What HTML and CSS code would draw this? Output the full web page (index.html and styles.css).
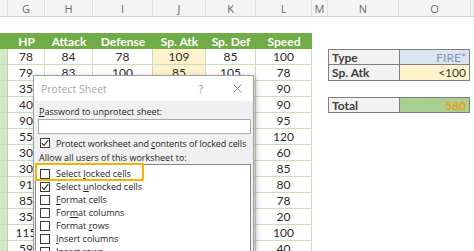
FILE: index.html
```html
<!DOCTYPE html>
<html>
<head>
<meta charset="utf-8">
<link rel="stylesheet" href="styles.css">
</head>
<body>
<div class="sheet">
  <div class="colheads">
    <span></span><span>G</span><span>H</span><span>I</span><span>J</span><span>K</span><span>L</span><span>M</span><span>N</span><span>O</span><span></span>
  </div>
  <div class="row"></div>
  <div class="row hdr">
    <span class="f"></span><span>HP</span><span>Attack</span><span>Defense</span><span>Sp. Atk</span><span>Sp. Def</span><span>Speed</span><span class="w"></span><span class="w"></span><span class="w"></span><span class="w"></span>
  </div>
  <div class="row data">
    <span class="f"></span><span>78</span><span>84</span><span>78</span><span class="sa">109</span><span>85</span><span>100</span><span class="e"></span>
    <span class="lab">Type</span><span class="val blue">FIRE*</span><span class="e"></span>
  </div>
  <div class="row data">
    <span class="f"></span><span>79</span><span>83</span><span>100</span><span class="sa">85</span><span>105</span><span>78</span><span class="e"></span>
    <span class="lab r2">Sp. Atk</span><span class="val r2 beige">&lt;100</span><span class="e"></span>
  </div>
  <div class="row data">
    <span class="f"></span><span>35</span><span></span><span></span><span class="sa"></span><span></span><span>90</span><span class="e"></span><span class="e"></span><span class="e"></span><span class="e"></span>
  </div>
  <div class="row data">
    <span class="f"></span><span>40</span><span></span><span></span><span class="sa"></span><span></span><span>90</span><span class="e"></span>
    <span class="lab">Total</span><span class="val green">580</span><span class="e"></span>
  </div>
  <div class="row data">
    <span class="f"></span><span>90</span><span></span><span></span><span class="sa"></span><span></span><span>95</span><span class="e"></span><span class="e"></span><span class="e"></span><span class="e"></span>
  </div>
  <div class="row data">
    <span class="f"></span><span>55</span><span></span><span></span><span class="sa"></span><span></span><span>120</span><span class="e"></span><span class="e"></span><span class="e"></span><span class="e"></span>
  </div>
  <div class="row data">
    <span class="f"></span><span>30</span><span></span><span></span><span class="sa"></span><span></span><span>60</span><span class="e"></span><span class="e"></span><span class="e"></span><span class="e"></span>
  </div>
  <div class="row data">
    <span class="f"></span><span>30</span><span></span><span></span><span class="sa"></span><span></span><span>85</span><span class="e"></span><span class="e"></span><span class="e"></span><span class="e"></span>
  </div>
  <div class="row data">
    <span class="f"></span><span>91</span><span></span><span></span><span class="sa"></span><span></span><span>80</span><span class="e"></span><span class="e"></span><span class="e"></span><span class="e"></span>
  </div>
  <div class="row data">
    <span class="f"></span><span>85</span><span></span><span></span><span class="sa"></span><span></span><span>78</span><span class="e"></span><span class="e"></span><span class="e"></span><span class="e"></span>
  </div>
  <div class="row data">
    <span class="f"></span><span>35</span><span></span><span></span><span class="sa"></span><span></span><span>20</span><span class="e"></span><span class="e"></span><span class="e"></span><span class="e"></span>
  </div>
  <div class="row data">
    <span class="f"></span><span>115</span><span></span><span></span><span class="sa"></span><span></span><span>100</span><span class="e"></span><span class="e"></span><span class="e"></span><span class="e"></span>
  </div>
  <div class="row data">
    <span class="f"></span><span>59</span><span></span><span></span><span class="sa"></span><span></span><span>40</span><span class="e"></span><span class="e"></span><span class="e"></span><span class="e"></span>
  </div>
</div>

<div class="dialog">
  <div class="dtitle">
    <span class="dname">Protect Sheet</span>
    <span class="qm">?</span>
    <svg class="xbtn" width="9" height="9" viewBox="0 0 9 9"><path d="M0.5 0.5L8.5 8.5M8.5 0.5L0.5 8.5" stroke="#8a8a8a" stroke-width="1"/></svg>
  </div>
  <div class="dbody">
    <div class="lbl"><u>P</u>assword to unprotect sheet:</div>
    <div class="pwd"></div>
    <div class="chkrow">
      <span class="cb"><svg width="8" height="8" viewBox="0 0 8 8"><path d="M0.8 4.2L3 6.4L7.2 1.2" fill="none" stroke="#333" stroke-width="1.1"/></svg></span>
      <span class="nw">Protect worksheet and <u>c</u>ontents of locked cells</span>
    </div>
    <div class="lbl lbl2">Allow all users of this worksheet to:</div>
    <div class="list">
      <div class="hl"></div>
      <div class="item"><span class="cb"></span><span>Select <u>l</u>ocked cells</span></div>
      <div class="item"><span class="cb"><svg width="8" height="8" viewBox="0 0 8 8"><path d="M0.8 4.2L3 6.4L7.2 1.2" fill="none" stroke="#333" stroke-width="1.1"/></svg></span><span>Select <u>u</u>nlocked cells</span></div>
      <div class="item"><span class="cb"></span><span><u>F</u>ormat cells</span></div>
      <div class="item"><span class="cb"></span><span>For<u>m</u>at columns</span></div>
      <div class="item"><span class="cb"></span><span>Format <u>r</u>ows</span></div>
      <div class="item"><span class="cb"></span><span><u>I</u>nsert columns</span></div>
      <div class="item"><span class="cb"></span><span>Insert rows</span></div>
    </div>
  </div>
</div>
</body>
</html>
```

FILE: styles.css
```css
* { box-sizing: border-box; margin: 0; padding: 0; }
html, body { margin: 0; background: #fff; }
body {
  width: 474px;
  height: 251px;
  overflow: hidden;
  position: relative;
  font-family: Lato, "Open Sans", sans-serif;
}

.colheads, .row {
  display: grid;
  grid-template-columns: 8px 37px 48px 60px 53px 50px 56px 16px 71px 72px 1fr;
}

.colheads {
  height: 17px;
  background: #f4f4f4;
  border-bottom: 1px solid #d2d2d2;
  color: #6b6b6b;
  font-size: 11px;
  font-family: "Open Sans", sans-serif;
}
.colheads span {
  display: flex;
  align-items: center;
  justify-content: center;
  border-right: 1px solid #e0e0e0;
}

.row { height: 16px; }
.row span {
  display: flex;
  align-items: center;
  justify-content: center;
  font-size: 12px;
  color: #2b2b2b;
  white-space: nowrap;
  overflow: hidden;
}

.hdr span {
  background: #70ad47;
  color: #fff;
  font-weight: 700;
}
.hdr span.w { background: #fff; }

.data span {
  border-bottom: 1px solid #c8dfb9;
  border-right: 1px solid #c8dfb9;
}
.data span.f { background: #d3e8c6; border-right: 1px solid #b7d4a3; border-bottom: 1px solid #c2dcb1; }
.data span.sa { background: #fff2cc; }
.data span.e { border: none; }

.data span.lab {
  justify-content: flex-start;
  padding-left: 3px;
  background: #f2f2f2;
  border: 1px solid #7f7f7f;
  border-right: none;
  font-weight: 700;
  color: #3f3f3f;
}
.data span.val {
  justify-content: flex-end;
  padding-right: 3px;
  border: 1px solid #7f7f7f;
  margin-right: 1px;
}
.data span.r2 { border-top: none; }
.data span.blue { background: #dbe4f3; color: #8496b0; }
.data span.beige { background: #fff2cc; color: #3a3a3a; }
.data span.green { background: #a9d08e; color: #f29c1f; font-weight: 700; }

/* dialog */
.dialog {
  position: absolute;
  left: 33px;
  top: 75px;
  width: 221px;
  height: 190px;
  border: 1px solid #a0a0a0;
  background: #f0f0f0;
  box-shadow: 2px 2px 6px rgba(0, 0, 0, 0.28);
  font-family: "Open Sans", sans-serif;
  font-size: 9px;
  color: #1e1e1e;
  overflow: hidden;
}
.dtitle {
  height: 25px;
  background: #fff;
  display: flex;
  align-items: center;
  padding: 0 11px 0 7px;
}
.dname { color: #a8a8a8; font-size: 10.5px; flex: 1; }
.qm { color: #8a8a8a; font-size: 10px; margin-right: 30px; }
.xbtn { display: block; }

.dbody { padding: 4px 2px 0 4px; }
.lbl { height: 14px; line-height: 14px; padding-left: 1px; white-space: nowrap; }
.pwd {
  height: 15px;
  background: #fff;
  border: 1px solid #ababab;
}
.chkrow {
  display: flex;
  align-items: center;
  height: 12px;
  margin-top: 3px;
  padding-left: 2px;
  white-space: nowrap;
}
.nw { white-space: nowrap; letter-spacing: -0.1px; }
.cb {
  width: 10px;
  height: 10px;
  border: 1px solid #3c3c3c;
  background: #fff;
  display: flex;
  align-items: center;
  justify-content: center;
  margin-right: 6px;
  flex: none;
}
.cb svg { display: block; }
.lbl2 { height: 13px; line-height: 14px; margin-top: 2px; }
.list {
  position: relative;
  margin-left: -3px;
  background: #fff;
  border: 1px solid #828790;
  height: 100px;
  padding-top: 2px;
}
.item {
  display: flex;
  align-items: center;
  height: 13px;
  padding-left: 4px;
  white-space: nowrap;
}
.hl {
  position: absolute;
  left: -1px;
  top: -2px;
  width: 109px;
  height: 18px;
  border: 2px solid #f5b400;
  border-radius: 1px;
}
```
